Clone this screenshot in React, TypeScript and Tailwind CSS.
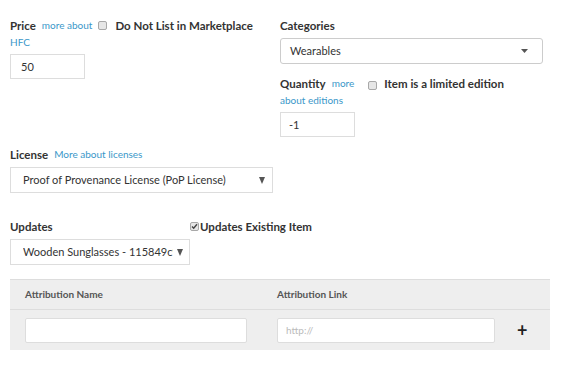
import React from 'react';

const Caret = ({ w = 7, h = 7, className = '' }: { w?: number; h?: number; className?: string }) => (
  <svg width={w} height={h} viewBox={`0 0 ${w} ${h}`} className={className}>
    <path d={`M0 0h${w}L${w / 2} ${h}z`} fill="#555" />
  </svg>
);

const Box = ({ checked = false }: { checked?: boolean }) => (
  <span className="inline-flex items-center justify-center w-[9px] h-[9px] border border-[#a8a8a8] rounded-[2px] bg-[#e6e6e6] shrink-0">
    {checked && (
      <svg width="7" height="7" viewBox="0 0 7 7">
        <path d="M1 3.5l1.7 1.8L6 1.2" stroke="#444" strokeWidth="1.4" fill="none" />
      </svg>
    )}
  </span>
);

export default function App() {
  return (
    <div className="w-[575px] h-[374px] bg-white text-[#333] font-['Lato','Liberation_Sans',sans-serif] relative">
      <div className="flex pt-[17px] px-[10px]">
        {/* Left column */}
        <div className="w-[270px]">
          <div className="flex items-center gap-[6px] h-[17px]">
            <span className="text-[11.5px] font-bold">Price</span>
            <span className="text-[10px] text-[#3a97c9]">more about</span>
            <Box />
            <span className="text-[11.5px] font-bold ml-[2px]">Do Not List in Marketplace</span>
          </div>
          <div className="text-[10px] text-[#3a97c9] mt-[1px] leading-[14px]">HFC</div>
          <input
            defaultValue="50"
            className="mt-[5px] w-[75px] h-[25px] border border-[#ddd] px-[10px] text-[11px] text-[#333] outline-none"
          />
        </div>

        {/* Right column */}
        <div className="flex-1">
          <div className="text-[11.5px] font-bold h-[17px] leading-[17px]">Categories</div>
          <div className="mt-[4px] w-[263px] h-[26px] border border-[#ccc] rounded-[3px] flex items-center justify-between px-[9px] text-[11px]">
            <span>Wearables</span>
            <Caret w={7} h={4} className="mr-[5px]" />
          </div>
          <div className="flex items-center mt-[11px] h-[17px]">
            <span className="text-[11.5px] font-bold">Quantity</span>
            <span className="text-[10px] text-[#3a97c9] ml-[6px]">more</span>
            <span className="ml-[14px]"><Box /></span>
            <span className="text-[11.5px] font-bold ml-[7px]">Item is a limited edition</span>
          </div>
          <div className="text-[10px] text-[#3a97c9] leading-[14px] mt-[1px]">about editions</div>
          <input
            defaultValue="-1"
            className="mt-[5px] w-[75px] h-[25px] border border-[#ddd] px-[8px] text-[11px] text-[#333] outline-none"
          />
        </div>
      </div>

      <div className="px-[10px] mt-[9px]">
        <div className="flex items-center gap-[6px] h-[17px]">
          <span className="text-[11.5px] font-bold">License</span>
          <span className="text-[10px] text-[#3a97c9]">More about licenses</span>
        </div>
        <div className="mt-[4px] w-[263px] h-[26px] border border-[#ddd] flex items-center justify-between pl-[12px] pr-[7px] text-[11px]">
          <span>Proof of Provenance License (PoP License)</span>
          <Caret w={6} h={7} />
        </div>

        <div className="flex items-end mt-[25px] h-[17px]">
          <span className="text-[11.5px] font-bold w-[180px]">Updates</span>
          <span className="flex items-center gap-[1px]">
            <Box checked />
            <span className="text-[11.5px] font-bold">Updates Existing Item</span>
          </span>
        </div>
        <div className="mt-[4px] w-[180px] h-[26px] border border-[#ddd] flex items-center justify-between pl-[12px] pr-[6px] text-[11px]">
          <span className="overflow-hidden whitespace-nowrap w-[150px]">Wooden Sunglasses - 115849c9</span>
          <Caret w={6} h={7} />
        </div>

        <div className="mt-[14px] w-[540px] bg-[#eee] border-t border-[#ddd]">
          <div className="flex items-center h-[30px] border-b border-[#ddd] text-[10px] font-bold text-[#555]">
            <span className="ml-[15px] w-[252px]">Attribution Name</span>
            <span>Attribution Link</span>
          </div>
          <div className="flex items-center h-[40px]">
            <input className="ml-[15px] w-[222px] h-[25px] bg-white border border-[#ddd] rounded-[2px] outline-none" />
            <input
              placeholder="http://"
              className="ml-[30px] w-[218px] h-[25px] bg-white border border-[#ddd] rounded-[2px] px-[8px] text-[10px] placeholder:text-[#bbb] outline-none"
            />
            <span className="ml-[22px] text-[18px] font-bold text-[#222] leading-none">+</span>
          </div>
        </div>
      </div>
    </div>
  );
}
